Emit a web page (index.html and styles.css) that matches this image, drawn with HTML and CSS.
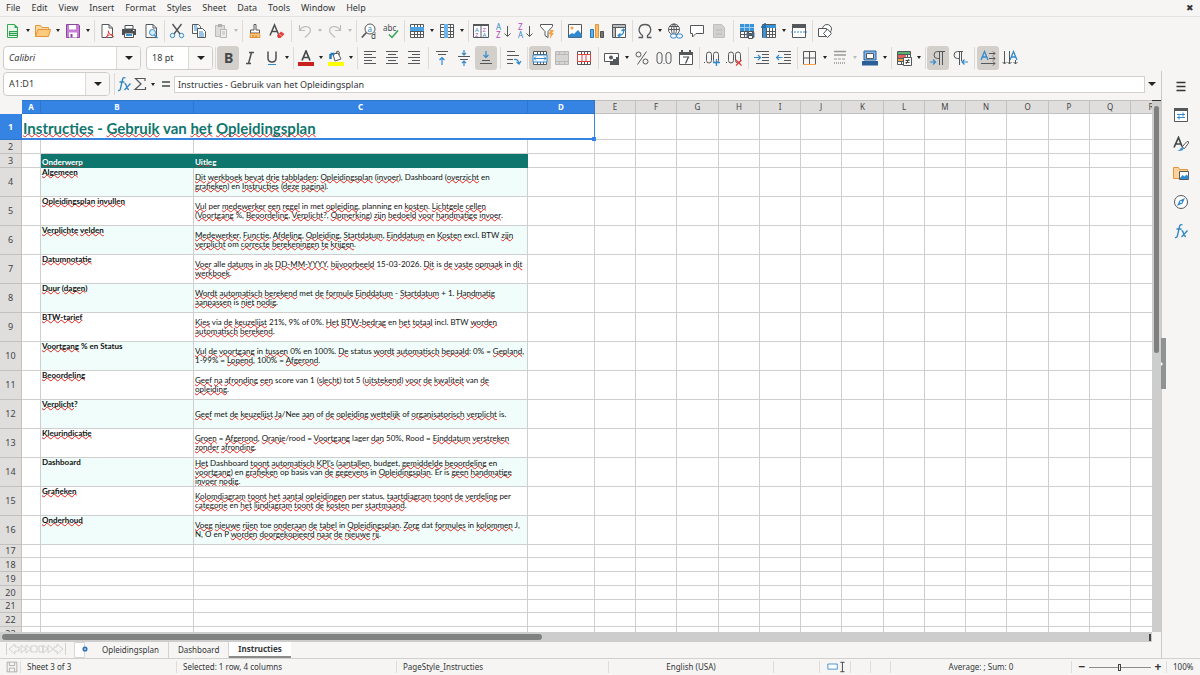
FILE: index.html
```html
<!DOCTYPE html>
<html lang="nl">
<head>
<meta charset="utf-8">
<title>Opleidingsplan - Instructies</title>
<link rel="stylesheet" href="styles.css">
</head>
<body>
<svg class="defs" aria-hidden="true">
  <defs>
    <symbol id="doc" viewBox="0 0 16 16"><path d="M3 1.5h7L13.500 5v9.500H3z" fill="#fff" stroke="#55585a"/><path d="M10 1.500V5h3.500" fill="none" stroke="#55585a"/></symbol>
    <symbol id="new" viewBox="0 0 16 16"><path d="M2.500 1.500h7l3 3v10h-10z" fill="#eaf7ee" stroke="#35a853"/><path d="M9.500 1v4h4" fill="#35a853"/><path d="M4 8h9v5H4z" fill="#2f9e4d"/><path d="M5 9.500h7M5 11.500h7" stroke="#bfe6c9"/></symbol>
    <symbol id="open" viewBox="0 0 16 16"><path d="M.5 13.500v-11h5l1.500 2h6.500v2" fill="#fbd9a0" stroke="#e3953a"/><path d="M.5 13.500 3 6.500h12.500l-2 7z" fill="#fdc97c" stroke="#e3953a"/></symbol>
    <symbol id="save" viewBox="0 0 16 16"><path d="M1.500 1.500h12l1 1v12h-13z" fill="#c77fd6" stroke="#8b46a0"/><path d="M4 2h7v4.500H4z" fill="#fff"/><path d="M4 9.500h8v5H4z" fill="#fff"/><path d="M5.500 11h2v3.500h-2z" fill="#8b46a0"/></symbol>
    <symbol id="pdf" viewBox="0 0 16 16"><use href="#doc"/><path d="M7 15c2-3 3-6 2.500-7s-1 2 5.500 6M7 14c2-2 4-2.500 7-2.500" fill="none" stroke="#e0413c"/></symbol>
    <symbol id="print" viewBox="0 0 16 16"><path d="M4 2.500h8V6H4z" fill="#fff" stroke="#4c5053"/><path d="M1 6h14v6H1z" fill="#4c5053"/><path d="M3.500 10h9v4.500h-9z" fill="#fff" stroke="#4c5053"/><path d="M5 12h6" stroke="#3993d8" stroke-width="2"/><path d="M12 7.500h1.500" stroke="#fff"/></symbol>
    <symbol id="preview" viewBox="0 0 16 16"><use href="#doc"/><circle cx="9.500" cy="9.500" r="3" fill="#d7ecfb" stroke="#3189cf"/><path d="m11.500 12 3 3" stroke="#3189cf" stroke-width="1.500"/></symbol>
    <symbol id="cut" viewBox="0 0 16 16"><path d="M3.500 1 11 11M12.500 1 5 11" stroke="#4c5053" stroke-width="1.300"/><circle cx="3.500" cy="12.500" r="2.200" fill="none" stroke="#3189cf"/><circle cx="12.500" cy="12.500" r="2.200" fill="none" stroke="#3189cf"/></symbol>
    <symbol id="copy" viewBox="0 0 16 16"><path d="M1.500 1.500h6l2 2v7h-8z" fill="#fff" stroke="#55585a"/><path d="M3 5h4M3 7h4M3 3h3" stroke="#3189cf"/><path d="M6.500 5.500h5l3 3v6h-8z" fill="#fff" stroke="#55585a"/><path d="M8 9h4M8 11h5M8 13h5" stroke="#3189cf"/></symbol>
    <symbol id="paste" viewBox="0 0 16 16"><path d="M2.500 2.500h9v11h-9z" fill="#dcdbda" stroke="#b9b8b6"/><path d="M5 1h4v3H5z" fill="#b0afad"/><path d="M7.500 6.500h6v8h-6z" fill="#eee" stroke="#b9b8b6"/><path d="M9 9h3M9 11h3" stroke="#b9b8b6"/></symbol>
    <symbol id="brush" viewBox="0 0 16 16"><path d="M7 1.500h2V7h3.500v3h-9V7H7z" fill="#fff" stroke="#55585a"/><path d="M3.500 10.500h9l.5 4h-10z" fill="#fbc57a" stroke="#e3953a"/><path d="M6 12v2.500M9 12v2.500" stroke="#c97d20"/></symbol>
    <symbol id="clear" viewBox="0 0 16 16"><path d="M1 12.500 5.500 2l4.500 10.500M3 8.500h5.500" fill="none" stroke="#4c5053" stroke-width="1.500"/><path d="m8 12.500 4-4 3.500 2.500-4 4H9z" fill="#e0413c"/><path d="m10 10.500 3 3" stroke="#f7a3a0"/></symbol>
    <symbol id="undo" viewBox="0 0 16 16"><path d="M2.500 2v5.500H8M3 7C6 2 13.500 3 13.500 7.500c0 3-3 4-5.500 7" fill="none" stroke="#bdbcba" stroke-width="1.200"/></symbol>
    <symbol id="redo" viewBox="0 0 16 16"><path d="M13.500 2v5.500H8M13 7C10 2 2.500 3 2.500 7.500c0 3 3 4 5.500 7" fill="none" stroke="#bdbcba" stroke-width="1.200"/></symbol>
    <symbol id="find" viewBox="0 0 16 16"><circle cx="9" cy="6" r="5" fill="#fff" stroke="#55585a"/><path d="M5.500 9.500.800 14.500" stroke="#55585a" stroke-width="1.800"/><text x="6.500" y="8.500" class="g b">a</text><text x="10" y="15.500" class="g">d</text></symbol>
    <symbol id="spell" viewBox="0 0 16 16"><text x="0" y="8" class="g">abc</text><path d="m6 11.500 3 3 6-7" fill="none" stroke="#2fa84f" stroke-width="1.500"/></symbol>
    <symbol id="grid" viewBox="0 0 16 16"><path d="M1.500 1.500h13v13h-13zM1.500 4.500h13M1.500 8.500h13M1.500 11.500h13M5.500 1.500v13M8.500 1.500v13M11.500 1.500v13" fill="#fff" stroke="#55585a"/></symbol>
    <symbol id="row" viewBox="0 0 16 16"><use href="#grid"/><path d="M1 4h14v4H1z" fill="#4ba3e6"/></symbol>
    <symbol id="col" viewBox="0 0 16 16"><use href="#grid"/><path d="M5 1h4v14H5z" fill="#6db5ec"/></symbol>
    <symbol id="sort" viewBox="0 0 16 16"><path d="M.5 1.500h15v13H.5zM8 3v12" fill="#fff" stroke="#55585a"/><path d="M0 1h16v2H0z" fill="#55585a"/><text x="2" y="9" class="s b">A</text><text x="2" y="14" class="s p">Z</text><text x="9.500" y="9" class="s p">Z</text><text x="9.500" y="14" class="s b">A</text></symbol>
    <symbol id="down" viewBox="0 0 16 16"><path d="M12.500 3v10M9.500 10.500l3 3 3-3" fill="none" stroke="#55585a"/></symbol>
    <symbol id="az" viewBox="0 0 16 16"><text x="1" y="7" class="g b">A</text><text x="1" y="15" class="g p">Z</text><use href="#down"/></symbol>
    <symbol id="za" viewBox="0 0 16 16"><text x="1" y="7" class="g p">Z</text><text x="1" y="15" class="g b">A</text><use href="#down"/></symbol>
    <symbol id="filter" viewBox="0 0 16 16"><path d="M1.500 1.500h12v2l-4.500 5v6l-3-2v-4l-4.500-5z" fill="#fff" stroke="#55585a"/><path d="M11.500 7h3.500l-2 3h2l-4.500 6 1-4.500H9.500z" fill="#f3a344"/></symbol>
    <symbol id="image" viewBox="0 0 16 16"><path d="M1.500 1.500h13v13h-13z" fill="#fff" stroke="#55585a"/><circle cx="5" cy="5" r="1.500" fill="#f3a344"/><path d="m2 12 3-2 2 1 4-4 3.500 4v3.500H2z" fill="#3189cf"/></symbol>
    <symbol id="chart" viewBox="0 0 16 16"><path d="M1.500 6.500h3v8h-3z" fill="#64b1ec" stroke="#2379bd"/><path d="M6.500 1.500h3v13h-3z" fill="#fbbd68" stroke="#e3953a"/><path d="M11.500 8.500h3v6h-3z" fill="#777" stroke="#4c5053"/></symbol>
    <symbol id="pivot" viewBox="0 0 16 16"><path d="M1.500 1.500h13v13h-13zM4.500 1.500v13M1.500 4.500h13" fill="#fff" stroke="#55585a"/><path d="M2 2h12v2H2zM2 5h2v9H2z" fill="#bbb"/><path d="M12.500 6v3q0 3-5 3.500M10.500 8l2-2 2 2M9.500 10.500l-2.500 2 2.500 2" fill="none" stroke="#3189cf" stroke-width="1.200"/></symbol>
    <symbol id="omega" viewBox="0 0 16 16"><path d="M1.500 14.500h4v-2C-.5 8 2 1.500 8 1.500S16 8 10.500 12.500v2h4" fill="none" stroke="#55585a" stroke-width="1.300"/></symbol>
    <symbol id="link" viewBox="0 0 16 16"><circle cx="7" cy="6.500" r="5.500" fill="#fff" stroke="#55585a"/><ellipse cx="7" cy="6.500" rx="2.500" ry="5.500" fill="none" stroke="#55585a"/><path d="M1.500 6.500h11M2.500 3.500h9M7 1v11" stroke="#55585a"/><rect x="3.500" y="11" width="6" height="4" rx="2" fill="#f5f5f4" stroke="#3189cf"/><rect x="9.500" y="11" width="6" height="4" rx="2" fill="#f5f5f4" stroke="#3189cf"/></symbol>
    <symbol id="comment" viewBox="0 0 16 16"><path d="M1.500 2.500h13v8H7L3.500 14v-3.500h-2z" fill="#fff" stroke="#55585a"/></symbol>
    <symbol id="hf" viewBox="0 0 16 16"><path d="M2.500 1.500h8l3 3v10h-11z" fill="#d2d1cf" stroke="#c0bfbd"/><path d="M5 7h6M5 11h6" stroke="#b7b6b4"/></symbol>
    <symbol id="area" viewBox="0 0 16 16"><use href="#grid"/><path d="M1 1h14v7H1z" fill="#3993d8"/><path d="M1 4.500h14M5.500 1v7M10.500 1v7" stroke="#9dcdf2"/><path d="M7.500 9.500h8v5h-8z" fill="#4c6c88"/><path d="M9.500 8.500h4v2h-4zM9.500 12.500h4v3h-4z" fill="#fff" stroke="#4c5053"/></symbol>
    <symbol id="freeze" viewBox="0 0 16 16"><use href="#grid"/><path d="M2 2h13v3H2zM2 2h3v13H2z" fill="#3993d8"/><path d="M0 4h5M4 0v5" stroke="#1c69aa" stroke-width="1.500"/></symbol>
    <symbol id="split" viewBox="0 0 16 16"><path d="M1.500 1.500h13v13h-13z" fill="#fff" stroke="#55585a"/><path d="M1 1h14v4H1z" fill="#55585a"/><path d="M0 9h16" stroke="#3189cf" stroke-dasharray="2 1"/></symbol>
    <symbol id="shapes" viewBox="0 0 16 16"><circle cx="10" cy="6" r="4.500" fill="#fff" stroke="#55585a"/><path d="M1.500 5.500h8v8h-8z" fill="#fff" stroke="#55585a"/><path d="m10.500 6 4 4.500-4 4-4-4z" fill="#fff" stroke="#55585a"/></symbol>
    <symbol id="bold" viewBox="0 0 16 16"><text x="4" y="13" class="l k">B</text></symbol>
    <symbol id="italic" viewBox="0 0 16 16"><path d="M7 2.500h5M4 13.500h5M9.500 2.500l-3 11" stroke="#4c5053" stroke-width="1.500"/></symbol>
    <symbol id="under" viewBox="0 0 16 16"><path d="M4 1.500v6.500q0 4 4 4t4-4V1.500" fill="none" stroke="#4c5053" stroke-width="1.500"/><path d="M4 14.500h8" stroke="#3189cf"/></symbol>
    <symbol id="fontcol" viewBox="0 0 16 16"><path d="m4 10.500 4-9.500 4 9.500M5.500 7.500h5" fill="none" stroke="#44484a" stroke-width="1.700"/><path d="M0 12h16v4H0z" fill="#c9211e"/></symbol>
    <symbol id="hilite" viewBox="0 0 16 16"><path d="m5 4 5-1 3 6-6 2z" fill="#fff" stroke="#55585a"/><path d="M8 4q0-3 2-3t1 4" fill="none" stroke="#55585a"/><path d="M2.500 4v5M2.500 4h4" stroke="#2379bd" stroke-width="2.500"/><path d="M0 12h16v4H0z" fill="#ff0"/></symbol>
    <symbol id="left" viewBox="0 0 16 16"><path d="M2 1.500h12M2 4.500h8M2 7.500h12M2 10.500h8M2 13.500h12" stroke="#55585a"/></symbol>
    <symbol id="center" viewBox="0 0 16 16"><path d="M2 1.500h12M4 4.500h8M2 7.500h12M4 10.500h8M2 13.500h12" stroke="#55585a"/></symbol>
    <symbol id="right" viewBox="0 0 16 16"><path d="M2 1.500h12M6 4.500h8M2 7.500h12M6 10.500h8M2 13.500h12" stroke="#55585a"/></symbol>
    <symbol id="top" viewBox="0 0 16 16"><path d="M2 1.500h12M4 4.500h8" stroke="#55585a"/><path d="M8 15V8M5.500 10 8 7.500l2.500 2.500" fill="none" stroke="#3189cf" stroke-width="1.200"/></symbol>
    <symbol id="middle" viewBox="0 0 16 16"><path d="M2 6.500h12M4 9.500h8" stroke="#55585a"/><path d="M8 0v5M6 3l2 2 2-2M8 16v-5M6 13l2-2 2 2" fill="none" stroke="#3189cf" stroke-width="1.200"/></symbol>
    <symbol id="bottom" viewBox="0 0 16 16"><path d="M4 10.500h8M2 13.500h12" stroke="#55585a"/><path d="M8 1v6.500M5.500 5 8 7.500 10.500 5" fill="none" stroke="#3189cf" stroke-width="1.200"/></symbol>
    <symbol id="wrap" viewBox="0 0 16 16"><path d="M1 1.500h8M1 5.500h12M1 9.500h6M1 13.500h6" stroke="#55585a"/><path d="M8 9.500q4-1 5 4M10.500 12l2.500 2 2-3" fill="none" stroke="#3189cf" stroke-width="1.200"/></symbol>
    <symbol id="merge" viewBox="0 0 16 16"><use href="#grid"/><path d="M1 5h14v7H1z" fill="#fff" stroke="#3189cf"/><path d="M2 8.500h12M4 6.500l-2 2 2 2M12 6.500l2 2-2 2" fill="none" stroke="#3189cf"/></symbol>
    <symbol id="mergeg" viewBox="0 0 16 16"><path d="M1.500 1.500h13v13h-13zM1.500 4.500h13M1.500 11.500h13M5.500 1.500v3M10.500 1.500v3M5.500 11.500v3M10.500 11.500v3" fill="#d6d5d3" stroke="#b9b8b6"/></symbol>
    <symbol id="unmerge" viewBox="0 0 16 16"><use href="#grid"/><path d="M1.500 4.500h13v7h-13zM6 4v8M10 4v8" fill="#fff" stroke="#e0413c"/></symbol>
    <symbol id="money" viewBox="0 0 16 16"><path d="M.5 3.500h14v8H.5z" fill="#fff" stroke="#55585a"/><circle cx="7" cy="7.500" r="2" fill="#55585a"/><path d="M6 11h3v4H6zM9 9h3v6H9zM12 7h3v8h-3z" fill="#55585a"/></symbol>
    <symbol id="percent" viewBox="0 0 16 16"><circle cx="4.500" cy="4.500" r="2.500" fill="none" stroke="#55585a"/><circle cx="11.500" cy="11.500" r="2.500" fill="none" stroke="#55585a"/><path d="M12.500 1.500l-9 13" stroke="#55585a"/></symbol>
    <symbol id="number" viewBox="0 0 16 16"><rect x="1" y="2.500" width="5" height="11" rx="2.500" fill="none" stroke="#55585a"/><rect x="10" y="2.500" width="5" height="11" rx="2.500" fill="none" stroke="#55585a"/><path d="M7.500 13.500h1" stroke="#55585a"/></symbol>
    <symbol id="date" viewBox="0 0 16 16"><path d="M1.500 2.500h13v12h-13z" fill="#fff" stroke="#55585a"/><path d="M1 2h14v3H1zM3 0h2v3H3zM11 0h2v3h-2z" fill="#55585a"/><path d="M5 7h5.500l-3 6.500" fill="none" stroke="#44484a" stroke-width="1.200"/></symbol>
    <symbol id="dec" viewBox="0 0 16 16"><path d="M0 12.500h1" stroke="#55585a"/><rect x="2.500" y="2" width="5" height="11" rx="2.500" fill="none" stroke="#55585a"/><rect x="9.500" y="2" width="5" height="11" rx="2.500" fill="none" stroke="#55585a"/></symbol>
    <symbol id="decadd" viewBox="0 0 16 16"><use href="#dec"/><path d="M12.500 9v7M9 12.500h7" stroke="#3189cf" stroke-width="1.300"/></symbol>
    <symbol id="decdel" viewBox="0 0 16 16"><use href="#dec"/><path d="m10 10 5.500 5.500m0-5.500L10 15.500" stroke="#e0413c" stroke-width="1.300"/></symbol>
    <symbol id="ind" viewBox="0 0 16 16"><path d="M2 1.500h13M8 4.500h7M8 7.500h7M8 10.500h7M2 13.500h13" stroke="#55585a"/><path d="M0 7.500h6M4 5l2.500 2.500L4 10" fill="none" stroke="#3189cf" stroke-width="1.200"/></symbol>
    <symbol id="outd" viewBox="0 0 16 16"><path d="M2 1.500h13M8 4.500h7M8 7.500h7M8 10.500h7M2 13.500h13" stroke="#55585a"/><path d="M.500 7.500h6M3 5 .500 7.500 3 10" fill="none" stroke="#3189cf" stroke-width="1.200"/></symbol>
    <symbol id="border" viewBox="0 0 16 16"><path d="M1.500 14V1.500h12V14M7.500 2v12M2 8h11" fill="none" stroke="#55585a"/><path d="M1 14.500h13" stroke="#f3a344"/></symbol>
    <symbol id="bstyle" viewBox="0 0 16 16"><path d="M2 1.500h12M2 5h12" stroke="#999" stroke-width="1.500"/><path d="M2 9h12" stroke="#999" stroke-dasharray="3 1"/><path d="M2 13h12" stroke="#aaa" stroke-dasharray="1 1" stroke-width="2"/></symbol>
    <symbol id="bcolor" viewBox="0 0 16 16"><path d="M2 1h12v9H2z" fill="#7db9ea" stroke="#2a6099"/><path d="M4.500 3.500h7v5h-7z" fill="#fff" stroke="#55585a"/><path d="M0 11h16v4.500H0z" fill="#2a6099"/></symbol>
    <symbol id="cond" viewBox="0 0 16 16"><use href="#grid"/><path d="M2 2h12v2H2z" fill="#57b56b"/><path d="M2 5h8v3H2z" fill="#e0625e"/><path d="M2 9h6v2H2z" fill="#f3a344"/><path d="M7.500 7.500h8v8h-8z" fill="#fff" stroke="#55585a"/><path d="M9.500 10.500h4M9.500 12.500h4M13 9l-3 5" stroke="#44484a"/></symbol>
    <symbol id="ltr" viewBox="0 0 16 16"><path d="M15 1.500H7.500a3.500 3.500 0 0 0 0 7H9M9.500 2v13M12.500 2v13" fill="none" stroke="#55585a"/><path d="M0 12h5M3 9.500 5.500 12 3 14.500" fill="none" stroke="#3189cf" stroke-width="1.200"/></symbol>
    <symbol id="rtl" viewBox="0 0 16 16"><path d="M11 1.500H5.500a3.500 3.500 0 0 0 0 7H7M7.500 2v13M9.500 2v9" fill="none" stroke="#55585a"/><path d="M10 12h6M12.500 9.500 10 12l2.500 2.500" fill="none" stroke="#3189cf" stroke-width="1.200"/></symbol>
    <symbol id="dirh" viewBox="0 0 16 16"><path d="m1 10 3.500-8.500L8 10M2.500 7h4" fill="none" stroke="#3189cf" stroke-width="1.300"/><path d="M9 3.500h6M9 8.500h6M1 13.500h14M13 1.500l2 2-2 2M13 6.500l2 2-2 2M13 11.500l2 2-2 2" fill="none" stroke="#55585a"/></symbol>
    <symbol id="dirv" viewBox="0 0 16 16"><path d="m8 10 3.500-8.500L15 10M9.500 7h4" fill="none" stroke="#3189cf" stroke-width="1.300"/><path d="M2.500 1v13M7.500 1v13M13.500 10v4M.500 12l2 2 2-2M5.500 12l2 2 2-2M11.500 12l2 2 2-2" fill="none" stroke="#55585a"/></symbol>
    <symbol id="fx" viewBox="0 0 16 16"><path d="M2 14.500q2 .500 2.500-2L6.500 3.500q.5-2.500 3-1.500M3.500 6h5" fill="none" stroke="#2f86c6" stroke-width="1.300"/><path d="m8.500 7.500q1.500 0 2 3t2.500 3M14.500 7.500l-6 6.500" fill="none" stroke="#2f86c6" stroke-width="1.300"/></symbol>
    <symbol id="sigma" viewBox="0 0 16 16"><path d="M13 5V2.500H3.500L9 8l-6 5.500h10.500V11" fill="none" stroke="#55585a" stroke-width="1.200"/></symbol>
    <symbol id="equals" viewBox="0 0 16 16"><path d="M4 6h8M4 10h8" stroke="#44484a" stroke-width="1.500"/></symbol>
    <symbol id="menu" viewBox="0 0 16 16"><path d="M3.500 4.500h9M3.500 8.500h9M3.500 12.500h9" stroke="#333" stroke-width="1.500"/></symbol>
    <symbol id="props" viewBox="0 0 16 16"><path d="M1.500 1.500h13v13h-13z" fill="#fff" stroke="#55585a"/><path d="M1 1h14v3H1z" fill="#55585a"/><path d="M4 7.500h8M4 10.500h8M10 5.500v4M6 8.500v4" stroke="#3189cf"/></symbol>
    <symbol id="styles" viewBox="0 0 16 16"><path d="m1 11.500 4.500-10 3.500 9M3 8h5" fill="none" stroke="#44484a" stroke-width="1.700"/><path d="m9 11 5-5.500q2-.500 1.500 1.500l-4 5.500z" fill="#fff" stroke="#55585a"/><path d="M4 14.500q3 0 3.500-2 1-2 3.500 0-1.500 3.500-7 2z" fill="#3993d8"/></symbol>
    <symbol id="gallery" viewBox="0 0 16 16"><path d="M.5 13.500v-11h5l1 2h8v9z" fill="#fdd29a" stroke="#e3953a"/><path d="M6.500 6.500h9v8h-9z" fill="#fff" stroke="#55585a"/><path d="m7 13 2.500-3 2 1.500 2-2 2 2V14H7z" fill="#3189cf"/></symbol>
    <symbol id="navi" viewBox="0 0 16 16"><circle cx="8" cy="8" r="6.500" fill="#fff" stroke="#55585a"/><path d="M12 4 9.500 9.500 4 12l2.500-5.500z" fill="#3189cf"/><circle cx="8" cy="8" r="1" fill="#fff"/></symbol>
    <symbol id="disk" viewBox="0 0 16 16"><path d="M1.500 1.500h13v13h-13zM4.500 2v4h7V2M4.500 14V9.500h7V14" fill="none" stroke="#9b9a98"/></symbol>
    <symbol id="addtab" viewBox="0 0 16 16"><path d="M.5.5h10v15H.5z" fill="#fff" stroke="#d8d7d5"/><circle cx="11" cy="7" r="1.700" fill="#fff" stroke="#2a72b8" stroke-width="1.700"/></symbol>
  </defs>
</svg>

<div class="app">
  <nav class="menubar">
    <button>File</button><button>Edit</button><button>View</button><button>Insert</button><button>Format</button><button>Styles</button><button>Sheet</button><button>Data</button><button>Tools</button><button>Window</button><button>Help</button>
    <button class="close" aria-label="Close">✖</button>
  </nav>

  <div class="toolbar" id="standard"></div>
  <div class="toolbar" id="formatting">
    <div class="combo font"><input aria-label="Font name" value="Calibri"><button aria-label="Font list"><i class="caret"></i></button></div>
    <div class="combo size"><input aria-label="Font size" value="18 pt"><button aria-label="Size list"><i class="caret"></i></button></div>
    <span class="sep"></span>
  </div>

  <div class="work">
    <main class="main">
      <div class="formula">
        <div class="combo name"><input aria-label="Name box" value="A1:D1"><button aria-label="Ranges"><i class="caret"></i></button></div>
        <span class="sep"></span>
        <button class="fbtn" aria-label="Function wizard"><svg><use href="#fx"/></svg></button>
        <button class="fbtn sum" aria-label="Sum"><svg><use href="#sigma"/></svg></button>
        <button class="drop" aria-label="Sum functions"><i class="caret"></i></button>
        <button class="fbtn" aria-label="Formula"><svg><use href="#equals"/></svg></button>
        <input class="line" aria-label="Input line" value="Instructies - Gebruik van het Opleidingsplan">
        <button class="expand" aria-label="Expand formula bar"><i class="caret"></i></button>
      </div>
      <div class="gridarea">
        <div class="sheetwrap"><table class="sheet" id="sheet"></table></div>
        <div class="vscroll"><div class="vthumb"></div></div>
      </div>
      <div class="hscroll"><div class="hthumb"></div><div class="hgrip"></div></div>
      <div class="tabs">
        <svg class="tabnav" viewBox="0 0 62 14" aria-hidden="true"><path d="M1.500 1v12M4 7l6-5v3h4v4h-4v3zM16 3v8l5-4zM21 3v8l5-4zM26 4h6v6h-6zM34 4v6h4V4zM38 3l5 4-5 4zM43 3l5 4-5 4zM58 7l-6-5v3h-3v4h3v3zM60.500 1v12" fill="none" stroke="#d2d1cf"/></svg>
        <button class="add" aria-label="Add sheet"><svg><use href="#addtab"/></svg></button>
        <button class="tab">Opleidingsplan</button><button class="tab">Dashboard</button><button class="tab active">Instructies</button>
      </div>
    </main>
    <aside class="side">
      <button aria-label="Sidebar settings"><svg><use href="#menu"/></svg></button>
      <button aria-label="Properties"><svg><use href="#props"/></svg></button>
      <button aria-label="Styles"><svg><use href="#styles"/></svg></button>
      <button aria-label="Gallery"><svg><use href="#gallery"/></svg></button>
      <button aria-label="Navigator"><svg><use href="#navi"/></svg></button>
      <button aria-label="Functions"><svg><use href="#fx"/></svg></button>
      <div class="handle"></div>
    </aside>
  </div>

  <footer class="status">
    <span class="ic"><svg><use href="#disk"/></svg></span>
    <span>Sheet 3 of 3</span>
    <span>Selected: 1 row, 4 columns</span>
    <span>PageStyle_Instructies</span>
    <span class="mid">English (USA)</span>
    <span></span>
    <span class="ins"><svg viewBox="0 0 20 14"><path d="M.500 3.500h11v6H.500z" fill="#fff" stroke="#3189cf"/><path d="M15 1.500h5M15 12.500h5M17.500 1.500v11" stroke="#333"/></svg></span>
    <span></span>
    <span></span>
    <span class="mid">Average: ; Sum: 0</span>
    <span class="zoom"><button aria-label="Zoom out">−</button><input type="range" aria-label="Zoom" min="0" max="100" value="49"><button aria-label="Zoom in">+</button></span>
    <span>100%</span>
  </footer>
</div>
<script src="app.js"></script>
</body>
</html>
```

FILE: styles.css
```css
* { box-sizing: border-box; }
body {
  margin: 0;
  background: #f6f5f4;
  color: #333537;
  font: 9px/12px "Noto Sans", sans-serif;
}
button, input { font: inherit; color: inherit; margin: 0; }
button { border: 0; padding: 0; background: none; }
svg { display: block; width: 16px; height: 16px; }
.defs { display: none; }
.app { height: 100vh; display: flex; flex-direction: column; overflow: hidden; }

/* glyphs inside toolbar icons */
.g { font: 8px "Noto Sans", sans-serif; fill: #44484a; }
.s { font: 6px "Noto Sans", sans-serif; }
.l { font: bold 14px "Noto Sans", sans-serif; }
.k { fill: #44484a; }
.b { fill: #2f86c6; }
.p { fill: #b04cc0; }

.menubar { flex: none; height: 17px; display: flex; align-items: center; gap: 11px; padding: 0 6px; border-bottom: 1px solid #e3e2e0; }
.close { margin-left: auto; }

.toolbar { flex: none; height: 27px; display: flex; align-items: center; padding: 0 2px; }
.tool { flex: none; width: 22px; height: 24px; border-radius: 3px; display: flex; align-items: center; justify-content: center; }
.tool.on { background: #d3d0cc; }
.drop { flex: none; width: 8px; height: 24px; display: flex; align-items: center; justify-content: center; }
.caret { border: 3px solid transparent; border-top: 3px solid #222; border-bottom: 0; }
.drop .caret { border-width: 3px 2px 0; }
.drop:disabled .caret { border-top-color: #bbb; }
.sep { flex: none; width: 4px; height: 22px; background: linear-gradient(#dddbd8, #dddbd8) center / 1px 100% no-repeat; }
.sep.wide { width: 6px; }

.combo { flex: none; height: 24px; display: flex; background: #fff; border: 1px solid #cfccc8; border-radius: 4px; overflow: hidden; }
.combo input { flex: 1; min-width: 0; border: 0; padding: 0 5px; background: none; }
.combo button { width: 24px; display: flex; align-items: center; justify-content: center; border-left: 1px solid #dcdad7; background: #f8f7f6; }
.combo .caret { border-width: 4px 4px 0; }
.combo.font { width: 138px; margin: 0 5px 0 1px; font-style: italic; }
.combo.size { width: 67px; }
.combo.name { width: 107px; }

.work { flex: 1; min-height: 0; display: flex; }
.main { flex: 1; min-width: 0; display: flex; flex-direction: column; }
.formula { flex: none; height: 29px; display: flex; align-items: center; padding: 0 3px 3px; }
.formula .sep { margin-left: 2px; }
.fbtn { width: 16px; }
.formula .drop { width: 10px; }
.line { flex: 1; min-width: 0; height: 17px; padding: 0 3px; border: 1px solid #d5d2ce; background: #fff; }
.expand { width: 13px; display: flex; justify-content: center; }
.expand .caret { border-width: 4px 4px 0; }

.gridarea { flex: 1; min-height: 0; display: flex; }
.sheetwrap { flex: 1; min-width: 0; overflow: hidden; background: #fff; }
.sheet { table-layout: fixed; width: 1152px; border-collapse: separate; border-spacing: 0; }
.sheet th, .sheet td { padding: 0; border: 0 solid #cfcfcf; border-width: 0 1px 1px 0; overflow: hidden; }
.sheet th { background: #dfdedd; border-color: #c2c1bf; font-weight: normal; line-height: 12px; color: #444; }
.sheet thead th { font-size: 8px; border-top-width: 1px; }
.sheet th.sel { background: #3584e4; border-color: #2c76d0; color: #fff; font-weight: bold; }
.sheet thead th.corner { background: #f6f5f4; border-color: #f6f5f4; }
.sheet td { font-family: Lato, "Noto Sans", sans-serif; font-size: 8px; line-height: 9px; white-space: nowrap; color: #111; }
.sheet td.title { position: relative; overflow: visible; border: 1px solid #3584e4; border-width: 0 1px 2px 0; padding-left: 1px; font-weight: bold; font-size: 15px; line-height: 20px; color: #0f766e; vertical-align: bottom; }
.sheet td.title::after { content: ""; position: absolute; right: -2px; bottom: -3px; width: 4px; height: 4px; background: #3584e4; }
.sheet td.key { font-weight: bold; vertical-align: top; padding-left: 1px; }
.sheet td.text { vertical-align: middle; padding-left: 1px; }
.sheet td.head { background: #0f766e; border-color: #0f766e; color: #fff; font-weight: bold; vertical-align: bottom; padding-left: 1px; }
.sheet .tint { background: #f0fdfa; }
.bad { text-decoration: underline wavy #e2231a 1px; text-decoration-skip-ink: none; text-underline-offset: -1px; }

.vscroll { flex: none; width: 9px; padding: 5px 2px 0; border-top: 1px solid #333; background: #cdcdcd; }
.vthumb { height: 47%; border-radius: 3px; background: #7f7f7f; }
.hscroll { flex: none; height: 10px; margin-right: 9px; display: flex; align-items: center; padding: 0 1px 0 2px; background: #cdcdcd; }
.hthumb { width: 47%; height: 6px; border-radius: 3px; background: #7f8180; }
.hgrip { margin-left: auto; width: 2px; height: 7px; background: #444; }

.tabs { flex: none; height: 16px; display: flex; padding-left: 5px; font-size: 8px; }
.tabnav { width: 62px; height: 14px; }
.add { margin: 0 3px 0 7px; width: 16px; height: 16px; }
.tab { padding: 0 9px; border-right: 1px solid #d5d3d0; }
.tab.active { background: #fff; border-right: 0; border-bottom: 2px solid #8a8c8b; font-weight: bold; }

.side { position: relative; flex: none; width: 39px; border-left: 1px solid #cbc9c6; display: flex; flex-direction: column; align-items: center; }
.side button { width: 24px; height: 29px; padding-left: 4px; }
.side .handle { position: absolute; left: -1px; top: 267px; width: 5px; height: 51px; background: #8f9392; display: flex; align-items: center; }
.side .handle::before { content: ""; border: 2px solid transparent; border-left-color: #fff; }

.status { flex: none; height: 17px; border-top: 1px solid #d2d0cd; display: grid; grid-template-columns: 21px 156fr 220fr 212fr 165fr 46px 31px 20px 20px 181fr 95px 33px; align-items: center; font-size: 8px; }
.status > span { padding-left: 6px; border-right: 1px solid #dfddda; height: 12px; white-space: nowrap; }
.status > span:last-child { border: 0; }
.status .mid { padding: 0; text-align: center; }
.status .ic svg { width: 12px; height: 12px; }
.status .ins svg { width: 20px; height: 12px; }
.zoom { display: flex; align-items: center; gap: 3px; padding-right: 4px; }
.zoom button { width: 8px; font-size: 12px; font-weight: bold; line-height: 12px; }
.zoom input { appearance: none; flex: 1; min-width: 0; height: 12px; background: linear-gradient(#8c8c8c, #8c8c8c) center / 100% 1px no-repeat; }
.zoom input::-webkit-slider-thumb { appearance: none; width: 3px; height: 7px; border: 1px solid #444; background: #eee; }
```

FILE: app.js
```js
// "|" separator, "||" wide separator, "v" drop arrow, "x" disabled arrow, "!" prefix = pressed
function buildTools(id, spec) {
  const bar = document.getElementById(id);
  spec.split(" ").forEach(t => {
    if (t === "|" || t === "||") {
      const s = document.createElement("span");
      s.className = t === "|" ? "sep" : "sep wide";
      bar.append(s);
      return;
    }
    const b = document.createElement("button");
    if (t === "v" || t === "x") {
      b.className = "drop";
      b.disabled = t === "x";
      b.setAttribute("aria-label", "More");
      b.innerHTML = '<i class="caret"></i>';
    } else {
      const name = t.replace("!", "");
      b.className = t[0] === "!" ? "tool on" : "tool";
      b.setAttribute("aria-label", name);
      b.innerHTML = `<svg><use href="#${name}"/></svg>`;
    }
    bar.append(b);
  });
}
buildTools("standard", "new v open v save v | pdf print preview | cut copy paste x | brush clear || undo x redo x | find spell | row v col v | sort az za filter || image chart pivot | omega v link comment hf || area freeze v split | shapes");
buildTools("formatting", "!bold italic under v | fontcol v hilite v | left center right || top middle !bottom || wrap | !merge mergeg unmerge || money v percent number date | decadd decdel || ind outd | border v bstyle x bcolor v | cond v | !ltr rtl || !dirh dirv");

const widths = [22, 19, 153, 334, 67, 41, 41, 42, 41, 41, 41, 42, 41, 41, 41, 42, 41, 41, 41];
const rows = [
  ["Algemeen", "Dit werkboek bevat drie tabbladen: Opleidingsplan (invoer), Dashboard (overzicht en\ngrafieken) en Instructies (deze pagina)."],
  ["Opleidingsplan invullen", "Vul per medewerker een regel in met opleiding, planning en kosten. Lichtgele cellen\n(Voortgang %, Beoordeling, Verplicht?, Opmerking) zijn bedoeld voor handmatige invoer."],
  ["Verplichte velden", "Medewerker, Functie, Afdeling, Opleiding, Startdatum, Einddatum en Kosten excl. BTW zijn\nverplicht om correcte berekeningen te krijgen."],
  ["Datumnotatie", "Voer alle datums in als DD-MM-YYYY, bijvoorbeeld 15-03-2026. Dit is de vaste opmaak in dit\nwerkboek."],
  ["Duur (dagen)", "Wordt automatisch berekend met de formule Einddatum - Startdatum + 1. Handmatig\naanpassen is niet nodig."],
  ["BTW-tarief", "Kies via de keuzelijst 21%, 9% of 0%. Het BTW-bedrag en het totaal incl. BTW worden\nautomatisch berekend."],
  ["Voortgang % en Status", "Vul de voortgang in tussen 0% en 100%. De status wordt automatisch bepaald: 0% = Gepland,\n1-99% = Lopend, 100% = Afgerond."],
  ["Beoordeling", "Geef na afronding een score van 1 (slecht) tot 5 (uitstekend) voor de kwaliteit van de\nopleiding."],
  ["Verplicht?", "Geef met de keuzelijst Ja/Nee aan of de opleiding wettelijk of organisatorisch verplicht is."],
  ["Kleurindicatie", "Groen = Afgerond, Oranje/rood = Voortgang lager dan 50%, Rood = Einddatum verstreken\nzonder afronding."],
  ["Dashboard", "Het Dashboard toont automatisch KPI's (aantallen, budget, gemiddelde beoordeling en\nvoortgang) en grafieken op basis van de gegevens in Opleidingsplan. Er is geen handmatige\ninvoer nodig."],
  ["Grafieken", "Kolomdiagram toont het aantal opleidingen per status, taartdiagram toont de verdeling per\ncategorie en het lijndiagram toont de kosten per startmaand."],
  ["Onderhoud", "Voeg nieuwe rijen toe onderaan de tabel in Opleidingsplan. Zorg dat formules in kolommen J,\nN, O en P worden doorgekopieerd naar de nieuwe rij."]
];
// words the spelling checker accepts
const known = new Set("en in per of van dashboard is met planning budget status score basis op er rood btw excl incl om alle lager via toe dat tot j n o p nee".split(" "));
const check = s => s.replace(/[A-Za-z]+(?:[-'][A-Za-z]+)*/g, w => known.has(w.toLowerCase()) ? w : `<span class="bad">${w}</span>`).replace(/\n/g, "<br>");
const blank = n => "<td></td>".repeat(n);

let html = "<colgroup>" + widths.map(w => `<col style="width:${w}px">`).join("") + "</colgroup><thead><tr style=\"height:14px\"><th class=\"corner\"></th>";
"ABCDEFGHIJKLMNOPQR".split("").forEach((c, i) => html += `<th${i < 4 ? ' class="sel"' : ""}>${c}</th>`);
html += "</tr></thead><tbody>";
const line = (n, h, cells) => html += `<tr style="height:${h}px"><th${n === 1 ? ' class="sel"' : ""}>${n}</th>${cells}</tr>`;
line(1, 26, `<td class="title" colspan="4">${check("Instructies - Gebruik van het Opleidingsplan")}</td>` + blank(14));
line(2, 14, blank(18));
line(3, 14, `<td></td><td class="head">${check("Onderwerp")}</td><td class="head">${check("Uitleg")}</td>` + blank(15));
rows.forEach(([k, t], i) => {
  const tint = i % 2 ? "" : " tint";
  line(i + 4, 29, `<td></td><td class="key${tint}">${check(k)}</td><td class="text${tint}">${check(t)}</td>` + blank(15));
});
[13, 14, 14, 14, 13, 14, 14].forEach((h, i) => line(i + 17, h, blank(18)));
document.getElementById("sheet").innerHTML = html + "</tbody>";
```
